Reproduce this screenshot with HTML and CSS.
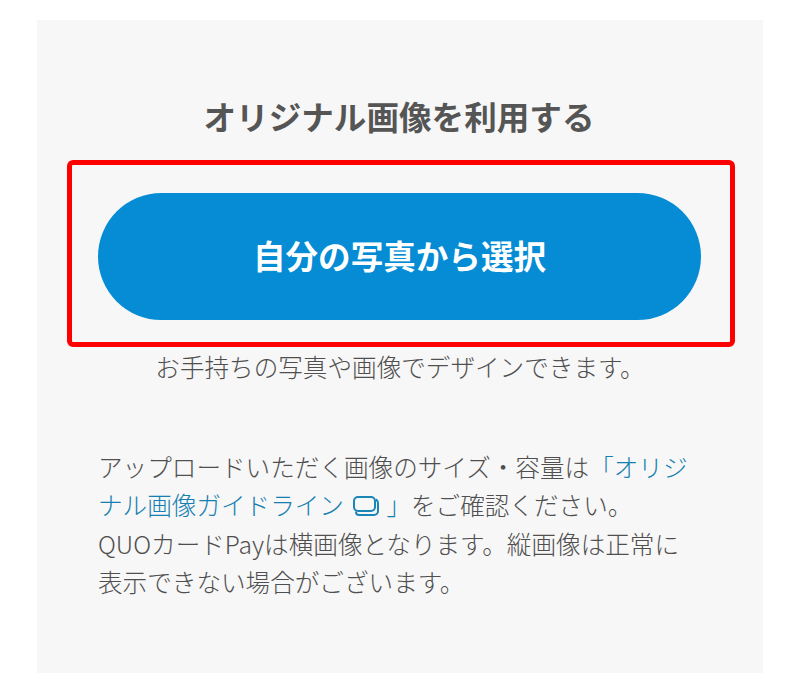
FILE: index.html
```html
<!DOCTYPE html>
<html lang="ja">
<head>
<meta charset="utf-8">
<title>オリジナル画像を利用する</title>
<link rel="stylesheet" href="styles.css">
</head>
<body>
<main class="panel">
  <h2 class="title">オリジナル画像を利用する</h2>
  <div class="highlight">
    <a class="pick" href="#">自分の写真から選択</a>
  </div>
  <p class="sub">お手持ちの写真や画像でデザインできます。</p>
  <p class="note">アップロードいただく画像のサイズ・容量は<a class="link" href="#">「オリジナル画像ガイドライン <svg class="ext" viewBox="0 0 26 20" aria-hidden="true"><rect x="1" y="1" width="21" height="14" rx="4"/><path d="M3 15.5v.5a3 3 0 0 0 3 3h15a4 4 0 0 0 4-4V7a4 4 0 0 0-2.2-3.5"/></svg>」</a>をご確認ください。<br>QUOカードPayは横画像となります。縦画像は正常に表示できない場合がございます。</p>
</main>
</body>
</html>
```
FILE: styles.css
```css
html, body {
  margin: 0;
  padding: 0;
  background: #fff;
}
body {
  height: 696px;
  overflow: hidden;
  font-family: "Noto Sans CJK JP", "Noto Sans", sans-serif;
  font-weight: 300;
  color: #4f4f4f;
}
.panel {
  margin: 20px 37px 0;
  height: 653px;
  background: #f7f7f7;
  padding: 0 28px 0 30px;
  box-sizing: border-box;
  display: flow-root;
}
.title {
  margin: 73px 4px 0 0;
  font-size: 32.6px;
  line-height: 46px;
  font-weight: 700;
  text-align: center;
  color: #555;
}
.highlight {
  margin-top: 21px;
  border: 5px solid #f00;
  border-radius: 6px;
  padding: 28px 29px 22px 26px;
}
.pick {
  display: block;
  height: 127px;
  line-height: 123px;
  border-radius: 64px;
  background: #058cd4;
  color: #fff;
  font-size: 32.6px;
  font-weight: 700;
  text-align: center;
  text-decoration: none;
}
.sub {
  margin: 1px 2px 0 0;
  font-size: 24.6px;
  line-height: 36px;
  text-align: center;
}
.note {
  margin: 63px 0 0;
  padding: 0 37px 0 31px;
  font-size: 24.6px;
  line-height: 38.4px;
}
.link {
  color: #1580b0;
  text-decoration: none;
}
.ext {
  width: 26px;
  height: 20px;
  margin: 0 7px 0 4px;
  vertical-align: -1px;
  fill: none;
  stroke: #1a86b8;
  stroke-width: 2;
}
```
